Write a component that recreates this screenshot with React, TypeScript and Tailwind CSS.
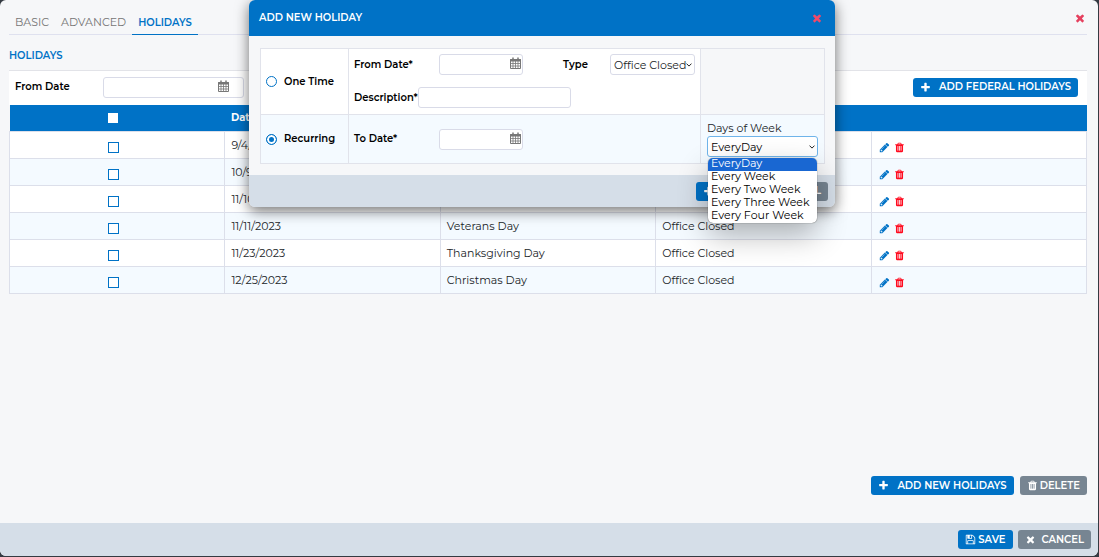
import React from "react";

const ICONS = {
  times:
    "M1490 1322q0 40-28 68l-136 136q-28 28-68 28t-68-28l-294-294-294 294q-28 28-68 28t-68-28l-136-136q-28-28-28-68t28-68l294-294-294-294q-28-28-28-68t28-68l136-136q28-28 68-28t68 28l294 294 294-294q28-28 68-28t68 28l136 136q28 28 28 68t-28 68l-294 294 294 294q28 28 28 68z",
  plus: "M1600 736v192q0 40-28 68t-68 28h-416v416q0 40-28 68t-68 28h-192q-40 0-68-28t-28-68v-416h-416q-40 0-68-28t-28-68v-192q0-40 28-68t68-28h416v-416q0-40 28-68t68-28h192q40 0 68 28t28 68v416h416q40 0 68 28t28 68z",
  pencil:
    "M491 1536l91-91-235-235-91 91v107h128v128h107zm523-928q0-22-22-22-10 0-17 7l-542 542q-7 7-7 17 0 22 22 22 10 0 17-7l542-542q7-7 7-17zm-54-192l416 416-832 832h-416v-416zm683 96q0 53-37 90l-166 166-416-416 166-165q36-38 90-38 53 0 91 38l235 234q37 39 37 91z",
  trash:
    "M704 1376v-704q0-14-9-23t-23-9h-64q-14 0-23 9t-9 23v704q0 14 9 23t23 9h64q14 0 23-9t9-23zm256 0v-704q0-14-9-23t-23-9h-64q-14 0-23 9t-9 23v704q0 14 9 23t23 9h64q14 0 23-9t9-23zm256 0v-704q0-14-9-23t-23-9h-64q-14 0-23 9t-9 23v704q0 14 9 23t23 9h64q14 0 23-9t9-23zm-544-992h448l-48-117q-7-9-17-11h-317q-10 2-17 11zm928 32v64q0 14-9 23t-23 9h-96v948q0 83-47 143.5t-113 60.5h-832q-66 0-113-58.5t-47-141.5v-952h-96q-14 0-23-9t-9-23v-64q0-14 9-23t23-9h309l70-167q15-37 54-63t79-26h320q40 0 79 26t54 63l70 167h309q14 0 23 9t9 23z",
  save: "M512 1536h768v-384h-768v384zm896 0h128v-896q0-14-10-38.5t-20-34.5l-281-281q-10-10-34-20t-39-10v416q0 40-28 68t-68 28h-576q-40 0-68-28t-28-68v-416h-128v1280h128v-416q0-40 28-68t68-28h832q40 0 68 28t28 68v416zm-384-928v-320q0-13-9.5-22.5t-22.5-9.5h-192q-13 0-22.5 9.5t-9.5 22.5v320q0 13 9.5 22.5t22.5 9.5h192q13 0 22.5-9.5t9.5-22.5zm640 32v928q0 40-28 68t-68 28h-1344q-40 0-68-28t-28-68v-1344q0-40 28-68t68-28h928q40 0 88 20t76 48l280 280q28 28 48 76t20 88z",
};

function Icon({ name, className }: { name: keyof typeof ICONS; className: string }) {
  return (
    <svg viewBox="0 0 1792 1792" fill="currentColor" aria-hidden="true" className={className}>
      <path d={ICONS[name]} />
    </svg>
  );
}

function CalendarIcon() {
  return (
    <svg viewBox="0 0 11 12" className="h-3 w-[11px] text-[#777]" aria-hidden="true" fill="none" stroke="currentColor">
      <path d="M.5 2.5h10v9H.5z" />
      <path d="M.5 2.5h10v1.5H.5z" fill="currentColor" />
      <path d="M3 .5v2M8 .5v2" strokeWidth="1.5" />
      <path d="M3 4v7M5.5 4v7M8 4v7M1 6.5h9M1 9h9" strokeWidth=".8" />
    </svg>
  );
}

function DateField({ id, className, iconClass }: { id: string; className: string; iconClass: string }) {
  return (
    <div className={`relative ${className}`}>
      <input id={id} type="text" className="block h-[21px] w-full rounded-[3px] border border-[#d9dbe8] bg-white px-1.5 outline-none" />
      <button type="button" aria-label="Open calendar" className={`absolute top-[3px] ${iconClass}`}>
        <CalendarIcon />
      </button>
    </div>
  );
}

function Chevron() {
  return (
    <svg viewBox="0 0 6 4" className="pointer-events-none absolute top-[9px] right-[3px] h-1 w-1.5" fill="none" stroke="#222" strokeWidth="1" aria-hidden="true">
      <path d="M.5.6 3 3.1 5.5.6" />
    </svg>
  );
}

function Button({ tone, children }: { tone: "blue" | "gray"; children: React.ReactNode }) {
  const color = tone === "blue" ? "bg-[#0072c6]" : "bg-[#778592]";
  return (
    <button type="button" className={`flex h-[19px] items-center rounded-[3px] px-[7px] text-[10px] font-semibold whitespace-nowrap text-white ${color}`}>
      {children}
    </button>
  );
}

const holidays = [
  ["9/4/2023", "Labor Day", "Office Closed"],
  ["10/9/2023", "Columbus Day", "Office Closed"],
  ["11/10/2023", "Veterans Day", "Office Closed"],
  ["11/11/2023", "Veterans Day", "Office Closed"],
  ["11/23/2023", "Thanksgiving Day", "Office Closed"],
  ["12/25/2023", "Christmas Day", "Office Closed"],
];

const frequencies = ["EveryDay", "Every Week", "Every Two Week", "Every Three Week", "Every Four Week"];

const label = "text-[10px] font-semibold text-black";
const checkbox = "block appearance-none border bg-white checked:bg-[#0072c6]";
const radio =
  "size-[11px] shrink-0 appearance-none rounded-full border border-[#0072c6] bg-white checked:bg-[#0072c6] checked:shadow-[inset_0_0_0_2px_white]";

function HolidayTable() {
  return (
    <table className="w-full table-fixed border-collapse">
      <thead>
        <tr className="h-[26px] bg-[#0072c6] text-left text-[10px] text-white">
          <th className="pr-2">
            <input type="checkbox" aria-label="Select all holidays" className={`${checkbox} mx-auto size-2.5 border-white`} />
          </th>
          <th className="px-1.5 font-bold">Date</th>
          <th className="px-1.5 font-bold">Description</th>
          <th className="px-1.5 font-bold">Type</th>
          <th aria-label="Actions" />
        </tr>
      </thead>
      <tbody>
        {holidays.map(([date, name, type]) => (
          <tr key={date} className="h-[27px] bg-white align-top leading-4 even:bg-[#f4faff]">
            <td className="border border-[#dcdfea] pt-2.5 pr-2">
              <input type="checkbox" aria-label={`Select ${name} ${date}`} className={`${checkbox} mx-auto size-[11px] border-[#0072c6]`} />
            </td>
            <td className="border border-[#dcdfea] px-1.5 pt-[5px]">{date}</td>
            <td className="border border-[#dcdfea] px-1.5 pt-[5px]">{name}</td>
            <td className="border border-[#dcdfea] px-1.5 pt-[5px]">{type}</td>
            <td className="border border-[#dcdfea] px-[7px] pt-2.5">
              <div className="flex items-center gap-1">
                <button type="button" aria-label={`Edit ${name}`}>
                  <Icon name="pencil" className="size-[11px] text-[#0072c6]" />
                </button>
                <button type="button" aria-label={`Delete ${name}`}>
                  <Icon name="trash" className="size-[11px] text-[#ff0a1e]" />
                </button>
              </div>
            </td>
          </tr>
        ))}
      </tbody>
    </table>
  );
}

function HolidayDialog() {
  return (
    <div className="absolute inset-x-0 top-0 flex justify-center pr-[15px]">
      <section
        role="dialog"
        aria-labelledby="dialog-title"
        className="w-[586px] rounded-md bg-[#f6f7f9] shadow-[0_4px_14px_rgba(0,0,0,0.55)]"
      >
        <header className="flex h-9 items-center justify-between rounded-t-md bg-[#0072c6] pr-3 pl-2.5 text-white">
          <h2 id="dialog-title" className="text-[10px] font-semibold">ADD NEW HOLIDAY</h2>
          <button type="button" aria-label="Close dialog">
            <Icon name="times" className="size-3 text-[#f0496a]" />
          </button>
        </header>
        <div className="pt-3 pr-2.5 pb-[11px] pl-[11px]">
          <div className="grid grid-cols-[88px_1fr_124px] border border-[#e1e3eb]">
            <div className="flex items-center gap-[7px] border-r border-b border-[#e1e3eb] bg-white pl-[5px]">
              <input id="one-time" type="radio" name="kind" className={radio} />
              <label htmlFor="one-time" className={label}>One Time</label>
            </div>
            <div className="border-b border-[#e1e3eb] bg-white pt-[5px] pb-1.5 pl-[5px]">
              <div className="flex items-center">
                <label htmlFor="from-date" className={`w-[85px] ${label}`}>From Date*</label>
                <DateField id="from-date" className="w-[84px]" iconClass="right-[2px]" />
                <label htmlFor="type" className={`ml-10 w-[47px] ${label}`}>Type</label>
                <div className="relative w-[85px]">
                  <select id="type" className="block h-[21px] w-full appearance-none rounded-[3px] border border-[#d9dbe8] bg-white pl-[3px] outline-none">
                    <option>Office Closed</option>
                  </select>
                  <Chevron />
                </div>
              </div>
              <div className="mt-3 flex items-center">
                <label htmlFor="description" className={`w-16 ${label}`}>Description*</label>
                <input id="description" type="text" className="h-[21px] w-[153px] rounded-[3px] border border-[#d9dbe8] bg-white px-1.5 outline-none" />
              </div>
            </div>
            <div className="border-b border-l border-[#e1e3eb]" />

            <div className="flex items-center gap-[7px] border-r border-[#e1e3eb] bg-[#f4faff] pl-[5px]">
              <input id="recurring" type="radio" name="kind" defaultChecked className={radio} />
              <label htmlFor="recurring" className={label}>Recurring</label>
            </div>
            <div className="flex items-center bg-[#f4faff] pl-[5px]">
              <label htmlFor="to-date" className={`w-[85px] ${label}`}>To Date*</label>
              <DateField id="to-date" className="w-[84px]" iconClass="right-[2px]" />
            </div>
            <div className="border-l border-[#e1e3eb] bg-[#f4faff] px-1.5 pt-[5px] pb-1.5">
              <label htmlFor="days" className="block leading-4">Days of Week</label>
              <div className="relative">
                <select id="days" className="block h-[21px] w-full appearance-none rounded-[3px] border border-[#6fb4ea] bg-white pl-[3px] text-black outline-none">
                  {frequencies.map((f) => (
                    <option key={f}>{f}</option>
                  ))}
                </select>
                <Chevron />
                <ul
                  role="listbox"
                  aria-label="Days of Week options"
                  className="absolute inset-x-px top-[22px] z-10 overflow-hidden rounded-[5px] bg-white text-black shadow-[0_0_1px_rgba(0,0,0,0.8),0_12px_30px_rgba(0,0,0,0.3)]"
                >
                  {frequencies.map((f, i) => (
                    <li
                      key={f}
                      role="option"
                      aria-selected={i === 0}
                      className="h-[13px] pl-[3px] leading-[10px] whitespace-nowrap aria-selected:bg-[#1967d2] aria-selected:text-white"
                    >
                      {f}
                    </li>
                  ))}
                </ul>
              </div>
            </div>
          </div>
        </div>
        <footer className="flex h-8 items-center justify-end gap-[5px] rounded-b-md bg-[#d5dee8] pr-[7px]">
          <Button tone="blue">
            <Icon name="plus" className="mr-1 size-[11px]" />
            ADD
          </Button>
          <Button tone="gray">
            <Icon name="times" className="mr-1.5 size-[11px]" />
            CANCEL
          </Button>
        </footer>
      </section>
    </div>
  );
}

export default function App() {
  return (
    <div className="relative flex min-h-screen flex-col bg-[#343a42] pr-px pb-px font-['Montserrat','Inter',sans-serif] text-[11px] leading-4 text-[#212529]">
      <div className="flex flex-1 flex-col overflow-hidden rounded-md bg-[#f6f7f9]">
        <main className="flex flex-1 flex-col pr-[11px] pl-[9px]">
          <div className="flex h-[35px] items-end justify-between border-b border-[#dfe1ef]">
            <nav className="flex items-end">
              <a href="#basic" className="h-5 px-1.5 text-[#757575]">BASIC</a>
              <a href="#advanced" className="h-5 px-1.5 text-[#757575]">ADVANCED</a>
              <a href="#holidays" aria-current="page" className="-mb-px h-5 border-b border-[#0072c6] px-1.5 text-[10px] font-semibold text-[#0072c6]">
                HOLIDAYS
              </a>
            </nav>
            <button type="button" aria-label="Close" className="mr-px mb-2.5">
              <Icon name="times" className="size-3 text-[#e5405e]" />
            </button>
          </div>
          <h1 className="pt-[13px] pb-1.5 text-[10px] font-semibold text-[#0072c6]">HOLIDAYS</h1>
          <div className="flex h-[35px] items-center justify-between border-t border-[#e2e3e8] bg-white pr-[9px] pb-0.5 pl-1.5">
            <div className="flex items-center">
              <label htmlFor="filter-from" className={`w-[88px] ${label}`}>From Date</label>
              <DateField id="filter-from" className="w-[141px]" iconClass="right-[15px]" />
            </div>
            <Button tone="blue">
              <Icon name="plus" className="mr-2 size-[11px]" />
              ADD FEDERAL HOLIDAYS
            </Button>
          </div>
          <HolidayTable />
          <div className="mt-auto flex justify-end gap-1.5 pt-6 pb-7">
            <Button tone="blue">
              <Icon name="plus" className="mr-2 size-[11px]" />
              ADD NEW HOLIDAYS
            </Button>
            <Button tone="gray">
              <Icon name="trash" className="mr-0.5 size-[11px]" />
              DELETE
            </Button>
          </div>
        </main>
        <footer className="flex h-[33px] items-center justify-end gap-[5px] bg-[#d5dee8] pr-[7px]">
          <Button tone="blue">
            <Icon name="save" className="mr-0.5 size-[11px]" />
            SAVE
          </Button>
          <Button tone="gray">
            <Icon name="times" className="mr-1.5 size-[11px]" />
            CANCEL
          </Button>
        </footer>
      </div>
      <HolidayDialog />
    </div>
  );
}
